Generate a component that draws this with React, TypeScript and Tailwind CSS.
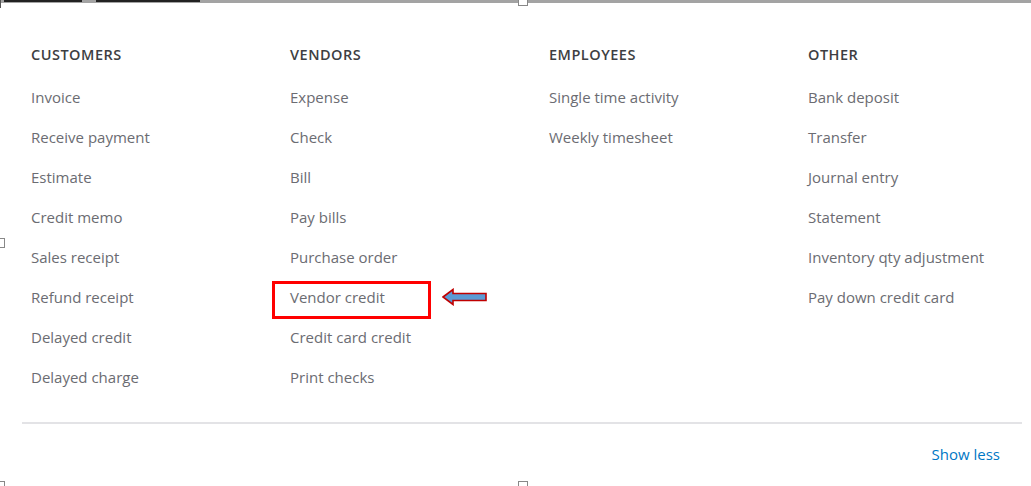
import React from 'react';

const COLUMNS: { title: string; items: string[] }[] = [
  { title: 'CUSTOMERS', items: ['Invoice', 'Receive payment', 'Estimate', 'Credit memo', 'Sales receipt', 'Refund receipt', 'Delayed credit', 'Delayed charge'] },
  { title: 'VENDORS', items: ['Expense', 'Check', 'Bill', 'Pay bills', 'Purchase order', 'Vendor credit', 'Credit card credit', 'Print checks'] },
  { title: 'EMPLOYEES', items: ['Single time activity', 'Weekly timesheet'] },
  { title: 'OTHER', items: ['Bank deposit', 'Transfer', 'Journal entry', 'Statement', 'Inventory qty adjustment', 'Pay down credit card'] },
];

function Arrow() {
  return (
    <svg width="46" height="18" viewBox="0 0 46 18" className="absolute left-[152px] top-[11px]">
      <path d="M1 9 L11 1.5 L11 5.5 L44 5.5 L44 12.5 L11 12.5 L11 16.5 Z" fill="#5b9bd5" stroke="#c00000" strokeWidth="1.6" strokeLinejoin="miter" />
    </svg>
  );
}

export default function App() {
  return (
    <div className="relative w-[1031px] h-[486px] bg-white overflow-hidden flex flex-col font-['Open_Sans','Lato',sans-serif]">
      {/* top edge of the captured window and the resize handles */}
      <div className="absolute left-0 top-0 w-full h-[3px] bg-[#a3a3a3]" />
      <div className="absolute left-[4px] top-0 w-[78px] h-[2px] bg-[#222]" />
      <div className="absolute left-[96px] top-0 w-[104px] h-[2px] bg-[#222]" />
      <div className="absolute left-0 top-0 w-[4px] h-[8px] border-l border-[#555]" />
      <div className="absolute left-[518px] top-0 w-[10px] h-[6px] bg-white border border-t-0 border-[#888]" />
      <div className="absolute left-[-5px] top-[238px] w-[10px] h-[10px] bg-white border border-[#888]" />
      <div className="absolute left-[-5px] top-[481px] w-[10px] h-[10px] bg-white border border-[#888]" />
      <div className="absolute left-[518px] top-[481px] w-[10px] h-[10px] bg-white border border-[#888]" />

      <div className="pt-[35px] pl-[31px] grid grid-cols-[259px_259px_259px_200px]">
        {COLUMNS.map(col => (
          <div key={col.title} className="flex flex-col">
            <div className="h-[40px] flex items-center text-[14.5px] font-semibold tracking-[0.5px] text-[#3d3e42]">{col.title}</div>
            <div className="mt-[2px] flex flex-col">
              {col.items.map(item => (
                <div key={item} className="relative h-[40px] flex items-center text-[15px] text-[#6b6c72]">
                  <span>{item}</span>
                  {item === 'Vendor credit' && (
                    <>
                      <div className="absolute left-[-18px] top-[4px] w-[159px] h-[38px] border-[3px] border-[#ff0000]" />
                      <Arrow />
                    </>
                  )}
                </div>
              ))}
            </div>
          </div>
        ))}
      </div>

      <div className="mt-auto ml-[22px] mr-[9px] h-[2px] bg-[#e3e3e6]" />
      <div className="flex justify-end pr-[31px] pt-[20px] pb-[22px] text-[15px] text-[#0077c5] leading-[20px]">
        <span>Show less</span>
      </div>
    </div>
  );
}
